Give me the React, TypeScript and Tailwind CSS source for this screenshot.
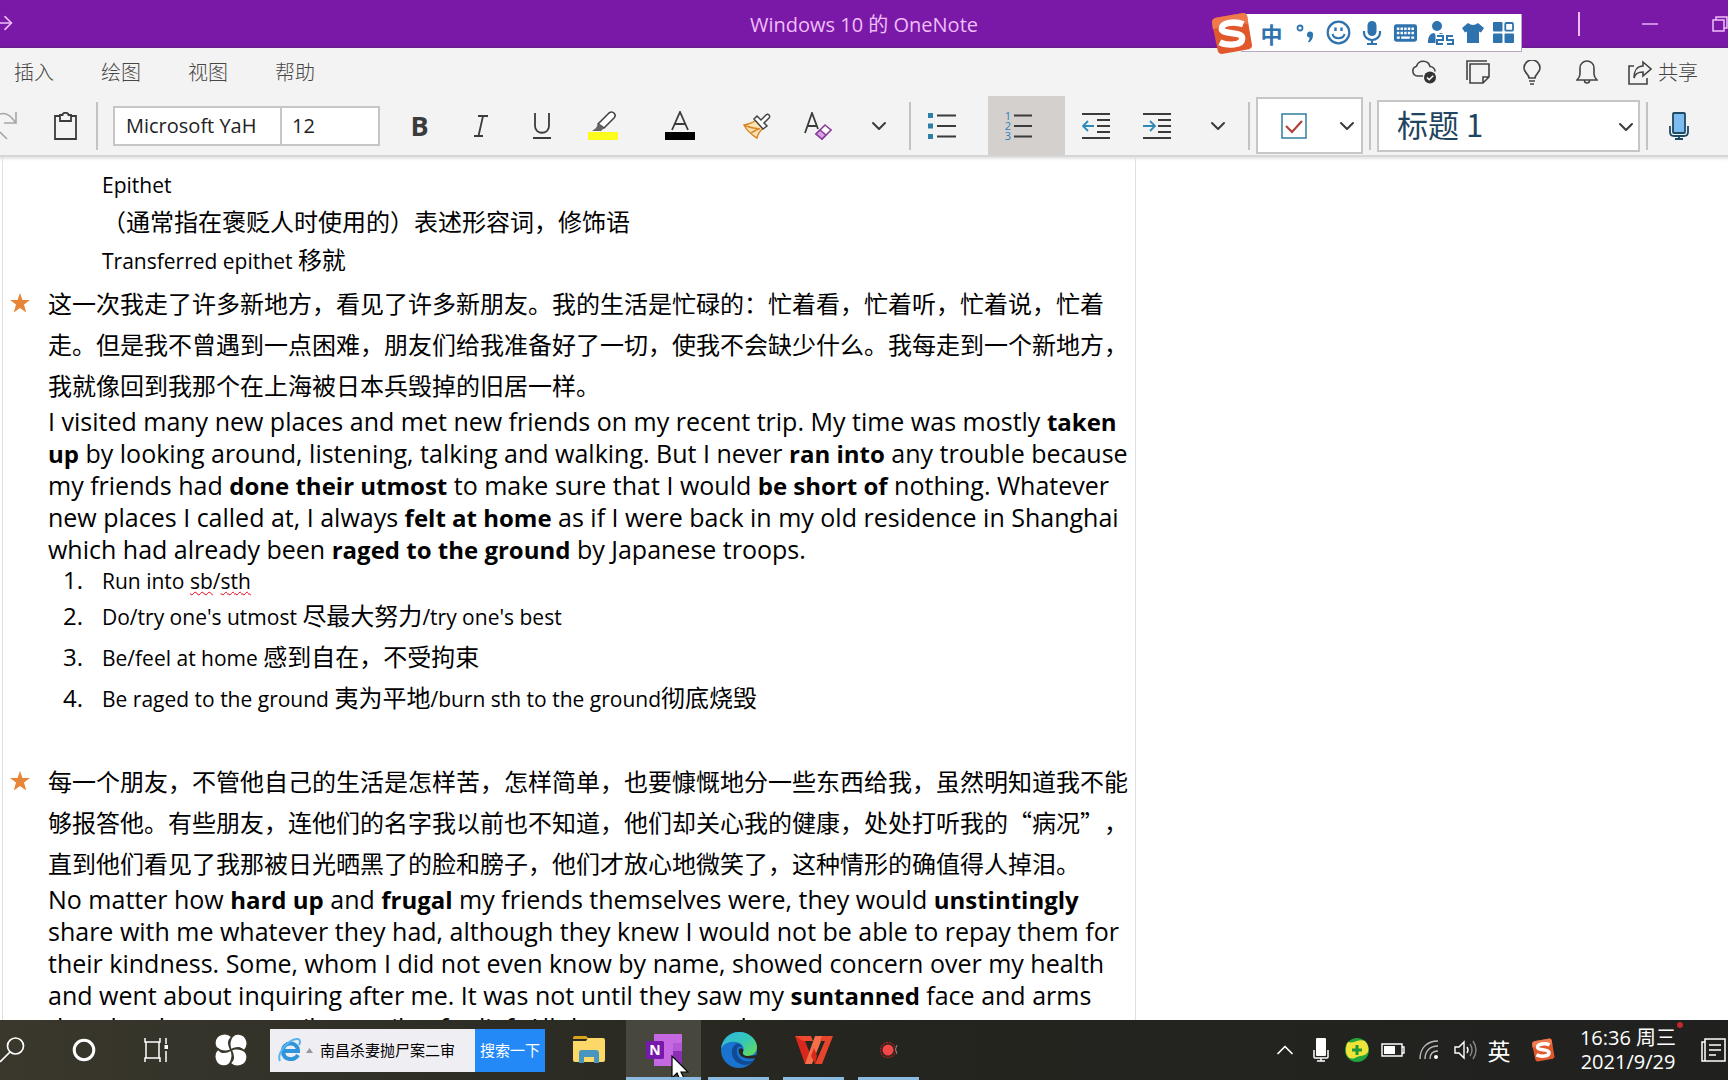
import React from 'react';
import { ChevronDown, ChevronUp, ArrowRight } from 'lucide-react';

const latin = "font-['Open_Sans','Noto_Sans_CJK_SC',sans-serif]";
const cjk = "font-['Noto_Sans_CJK_SC','Open_Sans',sans-serif]";

const tabs = ['插入', '绘图', '视图', '帮助'];

const Divider = () => <div className="h-12 w-0.5 shrink-0 bg-[#c3c3c3]"></div>;

type ToolProps = { label: string; wide?: boolean; active?: boolean; children: React.ReactNode };

const Tool = ({ label, wide, active, children }: ToolProps) => (
  <button
    aria-label={label}
    className={`flex h-full shrink-0 items-center justify-center ${wide ? 'w-[77px] pr-4' : 'w-[61px]'} ${active ? 'bg-[#d3d0ce]' : ''}`}
  >
    {children}
  </button>
);

const Chevron = () => <ChevronDown className="h-6 w-6 text-[#3b3b3b]" strokeWidth={2} />;

const SogouLogo = ({ className }: { className: string }) => (
  <svg viewBox="0 0 44 44" className={className}>
    <path d="M6 6 L34 1 Q37 1 38 4 L43 34 Q43 37 40 38 L12 43 Q9 43 8 40 L2 11 Q2 7 6 6Z" fill="#e2582d" />
    <path d="M6 6 L34 1 Q37 1 38 4 L39 12 Q20 10 3 18 L2 11 Q2 7 6 6Z" fill="#ef7a4c" />
    <path
      d="M34 12.500 C25 9 12 11 12 17 C12 24 33 19 33 27 C33 34 18 35 10 31"
      fill="none"
      stroke="#fff"
      strokeWidth="6.500"
    />
  </svg>
);

const ImeBar = () => (
  <div className="absolute left-[70%] top-3 flex h-[42px] items-center">
    <div className="z-10">
      <SogouLogo className="h-[43px] w-[43px]" />
    </div>
    <div className="-ml-3 flex h-[38px] items-center border-b border-r border-[#b9a9c4] bg-white pl-3.5 text-[#2e73ae]">
      <button className={`flex w-[34px] justify-center text-[22px] font-bold leading-none ${cjk}`}>中</button>
      <button aria-label="标点" className="flex w-[33px] justify-center">
        <svg width="20" height="20" viewBox="0 0 20 20">
          <circle cx="5" cy="5" r="2.500" fill="none" stroke="#2e73ae" strokeWidth="1.800" />
          <path d="M12 11a3 3 0 1 1 6 1c0 4-2 6-4 7.500l-1-1c1-1.500 1.500-2 1.500-4a3 3 0 0 1-2.500-3.500z" fill="#2e73ae" />
        </svg>
      </button>
      <button aria-label="表情" className="flex w-[33px] justify-center">
        <svg width="25" height="25" viewBox="0 0 25 25" fill="none" stroke="#2e73ae" strokeWidth="2.200">
          <circle cx="12.500" cy="12.500" r="10.800" />
          <path d="M6.500 14c1 5.500 11 5.500 12 0" strokeWidth="2" />
          <path d="M9.500 7.500v3.500M15.500 7.500v3.500" strokeWidth="2.400" />
        </svg>
      </button>
      <button aria-label="语音" className="flex w-[34px] justify-center">
        <svg width="20" height="26" viewBox="0 0 20 26">
          <rect x="5.500" y="1" width="9" height="15" rx="4.500" fill="#2e73ae" />
          <path d="M2 11v2a8 7 0 0 0 16 0v-2M10 20v4M5 24h10" fill="none" stroke="#2e73ae" strokeWidth="2.200" />
        </svg>
      </button>
      <button aria-label="软键盘" className="flex w-[33px] justify-center">
        <svg width="25" height="20" viewBox="0 0 26 20">
          <rect x="1" y="1" width="24" height="18" rx="2.500" fill="#2e73ae" />
          <path d="M4 5.500h18M4 10h18" stroke="#fff" strokeWidth="2.500" strokeDasharray="2.600 1.200" />
          <path d="M4 14.800h3M8.500 14.800h9M19 14.800h3" stroke="#fff" strokeWidth="2.400" />
        </svg>
      </button>
      <button aria-label="账号" className="flex w-[38px] justify-center">
        <svg width="30" height="26" viewBox="0 0 30 26">
          <circle cx="11" cy="6" r="5" fill="#2e73ae" />
          <path d="M2 22c0-6 3-9 6-9l3 3 3-3c3 0 5 2 6 5v5H2z" fill="#2e73ae" />
          <rect x="9.500" y="14" width="19.500" height="12" fill="#fff" />
          <path d="M11 16h6v4h-6v4h6M27 16h-6v4h6v4h-6" fill="none" stroke="#2e73ae" strokeWidth="2" />
        </svg>
      </button>
      <button aria-label="皮肤" className="flex w-[27px] justify-center">
        <svg width="22" height="22" viewBox="0 0 22 22">
          <path d="M6 1q5 4 10 0l6 5-3 4.500-2-1V21H5V9.500l-2 1L0 6z" fill="#2e73ae" />
        </svg>
      </button>
      <button aria-label="工具箱" className="flex w-[34px] justify-center">
        <svg width="21" height="21" viewBox="0 0 21 21" fill="#2e73ae">
          <rect x="0" y="0" width="9.500" height="9.500" rx="1" />
          <rect x="12.300" y="1" width="7.700" height="7.700" rx="1" fill="none" stroke="#2e73ae" strokeWidth="1.800" />
          <rect x="0" y="11.500" width="9.500" height="9.500" rx="1" />
          <rect x="11.500" y="11.500" width="9.500" height="9.500" rx="1" />
        </svg>
      </button>
    </div>
  </div>
);

const TitleBar = () => (
  <header className="relative flex h-12 shrink-0 items-center border-b-2 border-[#6c1c92] bg-[#7a19a8] text-[#efbdf8]">
    <button aria-label="前进" className="w-9 overflow-hidden">
      <ArrowRight className="-ml-1.5 h-[22px] w-[22px]" strokeWidth={1.8} />
    </button>
    <h1 className={`flex-1 pr-9 pt-1 text-center text-[20px] leading-6 ${latin}`}>Windows 10 的 OneNote</h1>
    <div className="absolute right-0 flex h-full items-center pt-0.5">
      <div className="mr-[58px] h-6 w-0.5 bg-[#efbdf8]"></div>
      <button aria-label="最小化" className="mr-[50px] flex w-6 justify-center">
        <svg width="16" height="2" viewBox="0 0 16 2">
          <path d="M0 1h16" stroke="#efbdf8" strokeWidth="1.400" />
        </svg>
      </button>
      <button aria-label="还原" className="w-4">
        <svg width="16" height="16" viewBox="0 0 16 16" fill="none" stroke="#efbdf8" strokeWidth="1.500">
          <path d="M1 4h11v11H1zM4 4V1h11v11h-3" />
        </svg>
      </button>
    </div>
    <ImeBar />
  </header>
);

const MenuBar = () => (
  <nav className="flex h-12 shrink-0 items-center justify-between pl-3.5 pr-[30px] text-[20px] leading-6 text-[#484644]">
    <div className={`flex gap-[47px] font-light ${cjk}`}>
      {tabs.map((tab) => (
        <button key={tab}>{tab}</button>
      ))}
    </div>
    <div className="flex items-center text-[#444]">
      <button aria-label="已同步" className="flex w-[54px] justify-center">
        <svg width="26" height="24" viewBox="0 0 26 24" fill="none">
          <path d="M12 16H6.500a5 5 0 0 1-1-9.800A7 7 0 0 1 19 6.500a5 5 0 0 1 5 5" stroke="#444" strokeWidth="1.600" />
          <circle cx="19" cy="17.500" r="6" fill="#333" />
          <path d="M16 17.500l2.200 2.200 4-4" stroke="#fff" strokeWidth="1.600" />
        </svg>
      </button>
      <button aria-label="便笺" className="flex w-[53px] justify-center">
        <svg width="24" height="24" viewBox="0 0 24 24" fill="none" stroke="#444" strokeWidth="1.600">
          <path d="M1 20V1h20" />
          <path d="M4 4h19v13l-6 6H4zM23 17h-6v6" />
        </svg>
      </button>
      <button aria-label="提示" className="flex w-[55px] justify-center">
        <svg width="18" height="25" viewBox="0 0 18 25" fill="none" stroke="#444" strokeWidth="1.600">
          <path d="M6 18c0-4-5-5-5-10a8 8 0 0 1 16 0c0 5-5 6-5 10zM6 21h6M7 24h4" />
        </svg>
      </button>
      <button aria-label="通知" className="flex w-[55px] justify-center">
        <svg width="22" height="25" viewBox="0 0 22 25" fill="none" stroke="#444" strokeWidth="1.600">
          <path d="M1 20c2-2 3-3 3-6V8a7 7 0 0 1 14 0v6c0 3 1 4 3 6zM8.500 20.500a2.500 2.500 0 0 0 5 0" />
        </svg>
      </button>
      <button className={`ml-3.5 flex items-center gap-1.5 font-light ${cjk}`}>
        <svg width="24" height="25" viewBox="0 0 24 25" fill="none" stroke="#444" strokeWidth="1.600">
          <path d="M6 6H1v18h18v-6" />
          <path d="M15 2l8 7-8 7v-4c-5 0-8 2-9 6 0-7 3-12 9-12z" />
        </svg>
        共享
      </button>
    </div>
  </nav>
);

const Toolbar = () => (
  <div className="flex h-[61px] shrink-0 items-center overflow-hidden border-b-2 border-[#d6d6d6] text-[#3b3b3b]">
    <button aria-label="重做" className="flex w-[35px] shrink-0">
      <svg width="17" height="28" viewBox="0 0 17 28" fill="none" stroke="#a6a6a6" strokeWidth="1.600">
        <path d="M16 0v11H4M16 11C12 5 6 0 0 2M0 20l7 7" />
      </svg>
    </button>
    <Tool label="粘贴">
      <svg width="23" height="28" viewBox="0 0 23 28" fill="none" stroke="#3b3b3b" strokeWidth="1.800">
        <path d="M6 4H1v23h21V4h-5" />
        <path d="M6 3h2.500c0-3 6-3 6 0H17v6H6z" />
      </svg>
    </Tool>
    <Divider />
    <div className={`ml-[15px] mr-[9px] flex h-10 w-[267px] shrink-0 border-2 border-[#c6c6c6] bg-white text-[20px] text-[#222] ${latin}`}>
      <input aria-label="字体" defaultValue="Microsoft YaH" className="w-[167px] border-r-2 border-[#c6c6c6] pl-[11px] outline-none" />
      <input aria-label="字号" defaultValue="12" className="min-w-0 flex-1 pl-2.5 outline-none" />
    </div>
    <Tool label="加粗">
      <span className={`text-[27px] font-bold leading-none ${latin}`}>B</span>
    </Tool>
    <Tool label="倾斜">
      <svg width="14" height="22" viewBox="0 0 14 22" fill="none" stroke="#3b3b3b" strokeWidth="1.800">
        <path d="M4 1h10M0 21h9M9 1L4.500 21" />
      </svg>
    </Tool>
    <Tool label="下划线">
      <svg width="18" height="26" viewBox="0 0 18 26" fill="none" stroke="#3b3b3b" strokeWidth="1.800">
        <path d="M2 0v13c0 9 14 9 14 0V0M0 25h18" />
      </svg>
    </Tool>
    <Tool label="荧光笔" wide>
      <svg width="30" height="30" viewBox="0 0 30 30">
        <rect x="0" y="21" width="30" height="8" fill="#fbfb1c" />
        <path d="M10 13L21 2c4-3 8 2 5 5L16 17z" fill="#fff" stroke="#444" strokeWidth="1.600" />
        <path d="M10 13l6 4-3 3H4l4-3z" fill="#666" />
      </svg>
    </Tool>
    <Tool label="字体颜色" wide>
      <svg width="30" height="30" viewBox="0 0 30 30">
        <rect x="0" y="21" width="30" height="8" fill="#000" />
        <path d="M7 19L15 1l8 18M10 13h10" fill="none" stroke="#3b3b3b" strokeWidth="1.800" />
      </svg>
    </Tool>
    <Tool label="格式刷">
      <svg width="28" height="26" viewBox="0 0 28 26" strokeWidth="1.500">
        <path d="M1 12c5-1 9-2 12-5l7 8c-3 3-5 5-6 10C9 22 4 18 1 12z" fill="#fde3b4" stroke="#d88a2b" />
        <path d="M1 12c4 2 8 3 16 4M8 20l7-4" fill="none" stroke="#d88a2b" />
        <path d="M11 6l3-3 4 4 5-5c2-2 5 1 3 3l-5 5 3 3-4 3z" fill="#fff" stroke="#444" />
      </svg>
    </Tool>
    <Tool label="清除格式">
      <svg width="28" height="28" viewBox="0 0 28 28" fill="none">
        <path d="M1 21L8 1l6 16M4 14h9" stroke="#3b3b3b" strokeWidth="1.800" />
        <path d="M12 22l9-9 6 5-9 9z" fill="#fff" stroke="#8a3f9c" strokeWidth="1.600" />
        <path d="M12 22l4-4 6 5-4 4z" fill="#d9a0e4" stroke="#8a3f9c" strokeWidth="1.600" />
      </svg>
    </Tool>
    <Tool label="更多字体选项">
      <Chevron />
    </Tool>
    <Divider />
    <Tool label="项目符号" wide>
      <svg width="28" height="26" viewBox="0 0 28 26">
        <path d="M0 0h5v5H0zM0 10.500h5v5H0zM0 21h5v5H0z" fill="#2e7fa8" />
        <path d="M9 2.500h19M9 13h19M9 23.500h19" stroke="#3b3b3b" strokeWidth="1.800" />
      </svg>
    </Tool>
    <Tool label="编号" wide active>
      <span className={`flex flex-col text-[11px] leading-[10px] text-[#2e7fb8] ${latin}`}>
        <span>1</span>
        <span>2</span>
        <span>3</span>
      </span>
      <svg width="21" height="26" viewBox="0 0 21 26">
        <path d="M3 2.500h18M3 13h18M3 23.500h18" stroke="#3b3b3b" strokeWidth="1.800" />
      </svg>
    </Tool>
    <Tool label="减少缩进">
      <svg width="28" height="26" viewBox="0 0 28 26" fill="none" strokeWidth="1.800">
        <path d="M0 1h28M15 7h13M15 13h13M15 19h13M0 25h28" stroke="#3b3b3b" />
        <path d="M12 13H1M6 8l-5 5 5 5" stroke="#2e8bb8" />
      </svg>
    </Tool>
    <Tool label="增加缩进">
      <svg width="28" height="26" viewBox="0 0 28 26" fill="none" strokeWidth="1.800">
        <path d="M0 1h28M15 7h13M15 13h13M15 19h13M0 25h28" stroke="#3b3b3b" />
        <path d="M0 13h12M7 8l5 5-5 5" stroke="#2e8bb8" />
      </svg>
    </Tool>
    <Tool label="更多段落选项">
      <Chevron />
    </Tool>
    <Divider />
    <div className="mx-1.5 flex h-[57px] w-[107px] shrink-0 items-center justify-between border-2 border-[#c6c6c6] bg-white pl-[23px] pr-0.5">
      <button aria-label="待办事项标记">
        <svg width="26" height="26" viewBox="0 0 26 26" fill="none">
          <rect x="1" y="1" width="24" height="24" stroke="#2f7f9e" strokeWidth="1.500" />
          <path d="M5 13l6 6L21 8" stroke="#b0413a" strokeWidth="2.200" />
        </svg>
      </button>
      <button aria-label="更多标记">
        <Chevron />
      </button>
    </div>
    <Divider />
    <div className="relative mx-1.5 h-[52px] w-[263px] shrink-0">
      <select
        aria-label="样式"
        className={`h-full w-full appearance-none border-2 border-[#c6c6c6] bg-white pb-1 pl-[18px] text-[31px] leading-[44px] text-[#1f4560] ${cjk}`}
      >
        <option>标题 1</option>
      </select>
      <div className="pointer-events-none absolute right-0.5 top-[15px]">
        <Chevron />
      </div>
    </div>
    <Divider />
    <Tool label="听写">
      <svg width="20" height="28" viewBox="0 0 20 28" fill="none" stroke="#1f4a63" strokeWidth="1.800">
        <rect x="4" y="1" width="12" height="20" rx="1" fill="#7cbcf0" />
        <path d="M1 14v6q0 4 4 4h10q4 0 4-4v-6M10 24v3M6 27h8" />
      </svg>
    </Tool>
  </div>
);

const Zh = ({ children }: { children: React.ReactNode }) => <span className="text-[24px] leading-none">{children}</span>;
const B = ({ children }: { children: React.ReactNode }) => <b className="text-[24px] leading-none">{children}</b>;
const Misspelled = ({ children }: { children: React.ReactNode }) => (
  <span className="underline decoration-red-600 decoration-wavy decoration-1 underline-offset-2">{children}</span>
);

const Starred = ({ children }: { children: React.ReactNode }) => (
  <div className="flex items-start">
    <svg viewBox="0 0 20 20" className="mr-[18px] mt-[11px] h-5 w-5 shrink-0" fill="#e78538">
      <path d="M10 0l2.500 7H20l-6 4.600 2.200 7.900L10 15l-6.200 4.500L6 11.600 0 7h7.500z" />
    </svg>
    <p className={`text-[24px] leading-[41px] [text-spacing-trim:space-all] ${cjk}`}>{children}</p>
  </div>
);

const English = ({ children }: { children: React.ReactNode }) => (
  <p className="pl-[38px] text-[25px] leading-8">{children}</p>
);

const notes = [
  <>Run into <Misspelled>sb</Misspelled>/<Misspelled>sth</Misspelled></>,
  <>Do/try one's utmost <Zh>尽最大努力</Zh>/try one's best</>,
  <>Be/feel at home <Zh>感到自在，不受拘束</Zh></>,
  <>Be raged to the ground <Zh>夷为平地</Zh>/burn sth to the ground<Zh>彻底烧毁</Zh></>,
];

const Page = () => (
  <main className="min-h-0 flex-1 overflow-hidden bg-white pl-0.5 shadow-[inset_0_4px_3px_-2px_#e4e4e4]">
    <article className={`h-full max-w-[1134px] border-x border-[#e0e0e0] pl-[7px] pt-[13px] text-black ${latin}`}>
      <div className="pl-[92px] text-[21px] leading-[31px]">
        <p>Epithet</p>
        <p className={`text-[24px] leading-10 ${cjk}`}>（通常指在褒贬人时使用的）表述形容词，修饰语</p>
        <p className="leading-[41px]">Transferred epithet <Zh>移就</Zh></p>
      </div>

      <Starred>
        这一次我走了许多新地方，看见了许多新朋友。我的生活是忙碌的：忙着看，忙着听，忙着说，忙着走。但是我不曾遇到一点困难，朋友们给我准备好了一切，使我不会缺少什么。我每走到一个新地方，我就像回到我那个在上海被日本兵毁掉的旧居一样。
      </Starred>
      <English>
        I visited many new places and met new friends on my recent trip. My time was mostly <B>taken up</B> by
        looking around, listening, talking and walking. But I never <B>ran into</B> any trouble because my friends
        had <B>done their utmost</B> to make sure that I would <B>be short of</B> nothing. Whatever new places I
        called at, I always <B>felt at home</B> as if I were back in my old residence in Shanghai which had already
        been <B>raged to the ground</B> by Japanese troops.
      </English>

      <ol className="mb-10 mt-px text-[21px]">
        {notes.map((note, i) => (
          <li key={i} className={`flex items-baseline ${i === 0 ? 'leading-[31px]' : 'leading-[41px]'}`}>
            <span className="w-[73px] text-right text-[24px] leading-none">{i + 1}.</span>
            <span className="pl-[19px]">{note}</span>
          </li>
        ))}
      </ol>

      <Starred>
        每一个朋友，不管他自己的生活是怎样苦，怎样简单，也要慷慨地分一些东西给我，虽然明知道我不能够报答他。有些朋友，连他们的名字我以前也不知道，他们却关心我的健康，处处打听我的“病况”，直到他们看见了我那被日光晒黑了的脸和膀子，他们才放心地微笑了，这种情形的确值得人掉泪。
      </Starred>
      <English>
        No matter how <B>hard up</B> and <B>frugal</B> my friends themselves were, they would <B>unstintingly</B>{' '}
        share with me whatever they had, although they knew I would not be able to repay them for their kindness.
        Some, whom I did not even know by name, showed concern over my health and went about inquiring after me. It
        was not until they saw my <B>suntanned</B> face and arms that they began to smile a smile of relief. All that
        was enough to move one <B>to tears</B>.
      </English>
    </article>
  </main>
);

type AppButtonProps = { label: string; running?: boolean; active?: boolean; children: React.ReactNode };

const AppButton = ({ label, running, active, children }: AppButtonProps) => (
  <button
    aria-label={label}
    className={`relative flex h-full w-[75px] items-center justify-center ${active ? 'bg-[#48473d]' : ''}`}
  >
    {children}
    {running && <span className={`absolute bottom-0 h-[3px] bg-[#8bbbe0] ${active ? 'inset-x-0' : 'inset-x-[7px]'}`}></span>}
  </button>
);

const TrayButton = ({ label, children }: { label: string; children: React.ReactNode }) => (
  <button aria-label={label} className="flex w-9 items-center justify-center">
    {children}
  </button>
);

const Taskbar = () => (
  <footer className="flex h-[60px] shrink-0 items-center justify-between overflow-hidden bg-linear-to-r from-[#3a382d] via-[#25251f] to-[#20211f] text-white">
    <div className="flex h-full items-center">
      <button aria-label="搜索" className="w-12">
        <svg width="25" height="26" viewBox="0 0 25 26" fill="none" stroke="#fff" strokeWidth="1.700">
          <circle cx="15.500" cy="9" r="8" />
          <path d="M10 15L0 25" />
        </svg>
      </button>
      <button aria-label="Cortana" className="flex w-[72px] justify-center">
        <svg width="24" height="24" viewBox="0 0 24 24" fill="none" stroke="#fff">
          <circle cx="12" cy="12" r="9.800" strokeWidth="3" />
        </svg>
      </button>
      <button aria-label="任务视图" className="flex w-[72px] justify-center">
        <svg width="25" height="26" viewBox="0 0 25 26" fill="none" stroke="#fff" strokeWidth="1.500">
          <path d="M1 1v4h15V1M1 25v-4h15v4M2 5v16M15 5v16M22 1v6M22 14v11" />
          <path d="M20.500 8h3.500v4h-3.500z" fill="#fff" stroke="none" />
        </svg>
      </button>
      <button aria-label="浏览器" className="flex w-[78px] justify-center">
        <svg width="34" height="34" viewBox="0 0 34 34" fill="#fff" stroke="#38372c" strokeWidth="1.500">
          <path d="M17 17C10 20 0 17 1 9 2 1 12-2 18 4c-4 3-4 8-1 13z" />
          <path d="M17 17C14 10 17 0 25 1c8 1 11 11 5 17-3-4-8-4-13-1z" />
          <path d="M17 17c7-3 17 0 16 8-1 8-11 11-17 5 4-3 4-8 1-13z" />
          <path d="M17 17c3 7 0 17-8 16C1 32-2 22 4 16c3 4 8 4 13 1z" />
        </svg>
      </button>
      <form className={`flex h-[43px] w-[275px] bg-[#efeef2] text-[15px] ${cjk}`}>
        <div className="flex min-w-0 flex-1 items-center pl-2">
          <svg width="24" height="26" viewBox="0 0 24 26" fill="none">
            <path d="M20 18c-3 6-15 6-15-4s15-10 15 0H7" stroke="#2e94dc" strokeWidth="4" />
            <path d="M2 24C-2 16 12 1 20 2c3 1 2 4 1 6" stroke="#58b4ee" strokeWidth="2" />
          </svg>
          <svg width="7" height="5" viewBox="0 0 7 5" className="ml-1 shrink-0">
            <path d="M0 5l3.500-5L7 5z" fill="#999" />
          </svg>
          <input aria-label="搜索内容" defaultValue="南昌杀妻抛尸案二审" className="ml-[7px] min-w-0 flex-1 text-black outline-none" />
        </div>
        <button type="button" className="w-[70px] bg-[#2389f7]">搜索一下</button>
      </form>
      <div className="ml-1.5 flex h-full">
        <AppButton label="文件资源管理器">
          <svg width="32" height="28" viewBox="0 0 32 28">
            <path d="M0 2q0-2 2-2h11l3 3H0z" fill="#d9a31c" />
            <path d="M0 5h13l2-3h15q2 0 2 2v20q0 2-2 2H2q-2 0-2-2z" fill="#fbd868" />
            <path d="M6 27V17q0-3 3-3h14q3 0 3 3v10h-5v-6H11v6z" fill="#4796c0" />
          </svg>
        </AppButton>
        <AppButton label="OneNote" running active>
          <svg width="36" height="34" viewBox="0 0 36 34">
            <path d="M8 1h28v32H8z" fill="#c668e2" />
            <path d="M27 1h9v9h-9z" fill="#c668e2" />
            <path d="M27 10h9v8h-9z" fill="#b257d6" />
            <path d="M27 18h9v15h-9z" fill="#8a2fb4" />
            <rect x="0" y="8" width="18" height="18" rx="1.500" fill="#7719aa" />
            <text x="9" y="22" textAnchor="middle" fontSize="14" fontWeight="700" fill="#fff" fontFamily="Open Sans">N</text>
          </svg>
          <svg width="18" height="28" viewBox="0 0 18 28" className="absolute left-[45px] top-[35px]">
            <path d="M1 1v22l5-5 4 9 4-2-4-8h7z" fill="#fff" stroke="#000" strokeWidth="1.200" />
          </svg>
        </AppButton>
        <AppButton label="Edge" running>
          <svg width="36" height="36" viewBox="0 0 36 36">
            <defs>
              <linearGradient id="edgeTop" x1="0" y1="0" x2="1" y2="1">
                <stop offset="0" stopColor="#2fb4e0" />
                <stop offset="0.500" stopColor="#35c7b8" />
                <stop offset="1" stopColor="#6be04c" />
              </linearGradient>
            </defs>
            <circle cx="18" cy="18" r="18" fill="#1a73cf" />
            <path d="M0 17C1 7 9 0 18 0c11 0 18 8 18 15 0 6-5 9-9 9-4 0-6-2-5-4 2-3 0-9-7-10C8 9 2 12 0 17z" fill="url(#edgeTop)" />
            <path d="M15 12c-6 3-7 18 8 21 5 0 8-2 10-5-8 4-19-1-17-11 1-3 4-3 6-1-1-3-4-5-7-4z" fill="#114a94" />
            <path d="M18 17c3-2 5 0 4 3-1 2 1 4 5 4l9-1-1 3c-9 2-19-1-17-9z" fill="#26281f" />
          </svg>
        </AppButton>
        <AppButton label="WPS" running>
          <svg width="38" height="28" viewBox="0 0 38 28">
            <path d="M0 0h8l8 20-3 8H10z" fill="#d8281c" />
            <path d="M0 0h16l2 5H8z" fill="#ee4a32" />
            <path d="M20 0h8L17 28h-7z" fill="#f5704a" />
            <path d="M19 12l3 8-2 8-4-8z" fill="#d8281c" />
            <path d="M30 5h-5l2-5h11L27 28h-7z" fill="#e8442c" />
          </svg>
        </AppButton>
        <AppButton label="录屏" running>
          <svg width="20" height="18" viewBox="0 0 20 18">
            <circle cx="9" cy="9" r="7.500" fill="none" stroke="#a32222" strokeWidth="1.400" strokeDasharray="2 1" />
            <circle cx="9" cy="9" r="5.500" fill="#f44848" />
            <path d="M18 4q-3 4 0 9" fill="none" stroke="#888" />
          </svg>
        </AppButton>
      </div>
    </div>

    <div className="flex h-full items-center">
      <TrayButton label="显示隐藏的图标">
        <ChevronUp className="h-7 w-7" strokeWidth={1.5} />
      </TrayButton>
      <TrayButton label="麦克风">
        <svg width="16" height="24" viewBox="0 0 16 24" fill="none" stroke="#fff" strokeWidth="1.500">
          <rect x="3" y="0" width="10" height="18" rx="1" fill="#fff" stroke="none" />
          <path d="M1 12v7q0 1 1 1h12q1 0 1-1v-7M8 20v3M4 23h8" />
        </svg>
      </TrayButton>
      <TrayButton label="安全卫士">
        <svg width="24" height="24" viewBox="0 0 24 24">
          <circle cx="12" cy="12" r="12" fill="#22a53c" />
          <path d="M3 4C8 6 14 0 20 3c3 3 4 7 3 11-3 5-9 3-13 6-5 2-9-2-9-7 0-4 0-6 2-9z" fill="#f0e43a" />
          <path d="M12 7v10M7 12h10" stroke="#1d9638" strokeWidth="3" />
        </svg>
      </TrayButton>
      <TrayButton label="电池">
        <svg width="24" height="14" viewBox="0 0 24 14" fill="none" stroke="#fff" strokeWidth="1.400">
          <path d="M1 1h20v12H1zM21 4h2v6h-2" />
          <path d="M3 3h11v8H3z" fill="#fff" stroke="none" />
        </svg>
      </TrayButton>
      <TrayButton label="网络">
        <svg width="20" height="20" viewBox="0 0 20 20" fill="none" stroke="#bbb" strokeWidth="1.400">
          <path d="M1 19C1 8 8 1 19 1M6 19C6 11 11 6 19 6M11 19c0-5 3-8 8-8" />
          <circle cx="17" cy="17" r="2" fill="#fff" stroke="none" />
        </svg>
      </TrayButton>
      <TrayButton label="音量">
        <svg width="23" height="20" viewBox="0 0 23 20" fill="none" stroke="#fff" strokeWidth="1.400">
          <path d="M1 7h4l5-5v16l-5-5H1zM13 7q2 3 0 6" />
          <path d="M16 4q4 6 0 12M19 1q6 9 0 18" stroke="#888" />
        </svg>
      </TrayButton>
      <button className={`w-8 text-center text-[23px] leading-none ${cjk}`}>英</button>
      <button aria-label="搜狗输入法" className="ml-1 flex w-12 justify-center">
        <SogouLogo className="h-6 w-6" />
      </button>
      <button className={`relative ml-1.5 w-[110px] text-center text-[20px] leading-6 ${latin}`}>
        16:36 周三
        <br />
        2021/9/29
        <span className="absolute -top-1 right-0 h-1.5 w-1.5 rounded-full bg-[#c4262e]"></span>
      </button>
      <button aria-label="通知中心" className="ml-[18px] mr-0.5">
        <svg width="25" height="25" viewBox="0 0 25 25" fill="none" stroke="#fff" strokeWidth="1.500">
          <path d="M4 1h20v22H4zM4 4H1v19h3M8 7h12M8 12h12M8 17h7" />
        </svg>
      </button>
    </div>
  </footer>
);

const App = () => (
  <div className="flex h-screen flex-col overflow-hidden bg-[#f3f3f3]">
    <TitleBar />
    <MenuBar />
    <Toolbar />
    <Page />
    <Taskbar />
  </div>
);

export default App;
